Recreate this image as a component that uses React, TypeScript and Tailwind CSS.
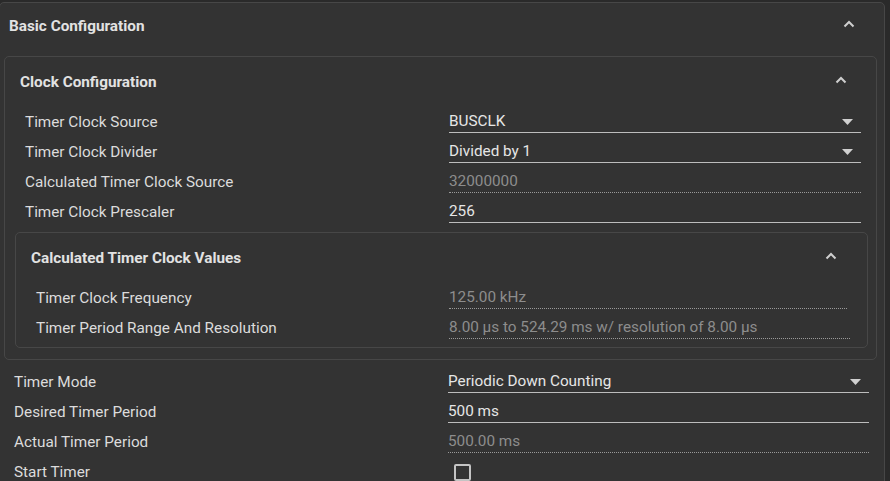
import React from "react";

const Chevron = ({ lift = 4 }: { lift?: number }) => (
  <svg width="12" height="8" viewBox="0 0 12 8" className="block" style={{ marginBottom: lift }}>
    <path d="M1.5 6.5 L6 2 L10.5 6.5" fill="none" stroke="#cfcfcf" strokeWidth="2" />
  </svg>
);

const Tri = () => (
  <svg width="11" height="6" viewBox="0 0 11 6" className="block">
    <path d="M0 0 H11 L5.5 6 Z" fill="#d0d0d0" />
  </svg>
);

type Kind = "select" | "input" | "ro";

function Field({ kind, value, width, arrowRight = 8 }: { kind: Kind; value: string; width: number; arrowRight?: number }) {
  const border =
    kind === "ro" ? "border-b border-dotted border-[#9a9a9a]" : "border-b border-[#bdbdbd]";
  const color = kind === "ro" ? "text-[#8d8d8d]" : "text-[#e6e6e6]";
  return (
    <div className={`h-[21px] flex items-center justify-between ${border}`} style={{ width }}>
      <span className={`${color} text-[15.3px] leading-none whitespace-nowrap`}>{value}</span>
      {kind === "select" && (
        <span style={{ marginRight: arrowRight }}>
          <Tri />
        </span>
      )}
    </div>
  );
}

function Row({
  label,
  labelW,
  kind,
  value,
  fieldW,
  arrowRight,
}: {
  label: string;
  labelW: number;
  kind: Kind;
  value: string;
  fieldW: number;
  arrowRight?: number;
}) {
  return (
    <div className="h-[30px] pt-[3px] flex items-center">
      <div className="text-[15.3px] text-[#dcdcdc] shrink-0 whitespace-nowrap" style={{ width: labelW }}>
        {label}
      </div>
      <Field kind={kind} value={value} width={fieldW} arrowRight={arrowRight} />
    </div>
  );
}

export default function App() {
  return (
    <div
      className="w-[890px] h-[481px] overflow-hidden bg-[#2a2a2a] pt-[2px]"
      style={{ fontFamily: "Roboto, 'Noto Sans', sans-serif" }}
    >
      <div className="ml-[-1px] w-[886px] h-[520px] border border-[#474747] rounded-[5px] bg-[#333333]">
        {/* outer header */}
        <div className="h-[53px] flex items-center justify-between pl-[9px] pr-[29px] pb-[6px]">
          <span className="text-[15.3px] font-bold text-[#e2e2e2]">Basic Configuration</span>
          <Chevron lift={5} />
        </div>

        {/* Clock configuration panel */}
        <div className="ml-[4px] w-[873px] border border-[#474747] rounded-[5px] pb-[11px]">
          <div className="h-[49px] flex items-center justify-between pl-[15px] pr-[29px] pt-[2px]">
            <span className="text-[15.3px] font-bold text-[#e2e2e2]">Clock Configuration</span>
            <Chevron lift={5} />
          </div>
          <div className="pl-[20px]">
            <Row label="Timer Clock Source" labelW={424} kind="select" value="BUSCLK" fieldW={412} />
            <Row label="Timer Clock Divider" labelW={424} kind="select" value="Divided by 1" fieldW={412} />
            <Row label="Calculated Timer Clock Source" labelW={424} kind="ro" value="32000000" fieldW={412} />
            <Row label="Timer Clock Prescaler" labelW={424} kind="input" value="256" fieldW={412} />
          </div>

          {/* inner panel */}
          <div className="mt-[6px] ml-[10px] w-[853px] border border-[#474747] rounded-[5px] pb-[5px]">
            <div className="h-[49px] flex items-center justify-between pl-[15px] pr-[30px] pt-[1px]">
              <span className="text-[15.3px] font-bold text-[#e2e2e2]">Calculated Timer Clock Values</span>
              <Chevron lift={5} />
            </div>
            <div className="pl-[20px]">
              <Row label="Timer Clock Frequency" labelW={413} kind="ro" value="125.00 kHz" fieldW={398} />
              <Row
                label="Timer Period Range And Resolution"
                labelW={413}
                kind="ro"
                value="8.00 µs to 524.29 ms w/ resolution of 8.00 µs"
                fieldW={401}
              />
            </div>
          </div>
        </div>

        {/* bottom rows */}
        <div className="mt-[6px] pl-[14px]">
          <Row label="Timer Mode" labelW={434} kind="select" value="Periodic Down Counting" fieldW={421} />
          <Row label="Desired Timer Period" labelW={434} kind="input" value="500 ms" fieldW={421} />
          <Row label="Actual Timer Period" labelW={434} kind="ro" value="500.00 ms" fieldW={421} />
          <div className="h-[30px] pt-[3px] flex items-center">
            <div className="text-[15.3px] text-[#dcdcdc] shrink-0 w-[440px]">Start Timer</div>
            <div className="w-[17px] h-[17px] border-2 border-[#c4c4c4] rounded-[2px]" />
          </div>
        </div>
      </div>
    </div>
  );
}
